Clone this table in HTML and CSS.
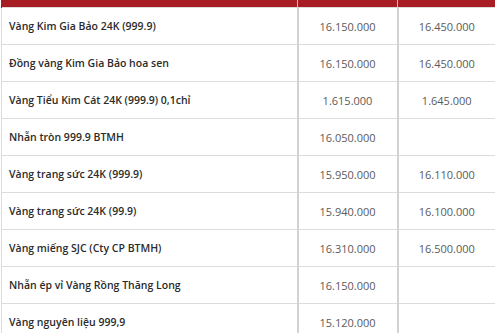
FILE: index.html
```html
<!DOCTYPE html>
<html lang="vi">
<head>
<meta charset="utf-8">
<link rel="stylesheet" href="styles.css">
</head>
<body>
<div class="wrap">
<table class="price-table">
<colgroup><col class="c-name"><col class="c-buy"><col class="c-sell"></colgroup>
<thead><tr class="head"><th></th><th></th><th></th></tr></thead>
<tbody>
<tr><td class="name">Vàng Kim Gia Bảo 24K (999.9)</td><td class="num">16.150.000</td><td class="num">16.450.000</td></tr>
<tr><td class="name">Đồng vàng Kim Gia Bảo hoa sen</td><td class="num">16.150.000</td><td class="num">16.450.000</td></tr>
<tr><td class="name">Vàng Tiểu Kim Cát 24K (999.9) 0,1chỉ</td><td class="num">1.615.000</td><td class="num">1.645.000</td></tr>
<tr><td class="name">Nhẫn tròn 999.9 BTMH</td><td class="num">16.050.000</td><td class="num"></td></tr>
<tr><td class="name">Vàng trang sức 24K (999.9)</td><td class="num">15.950.000</td><td class="num">16.110.000</td></tr>
<tr><td class="name">Vàng trang sức 24K (99.9)</td><td class="num">15.940.000</td><td class="num">16.100.000</td></tr>
<tr><td class="name">Vàng miếng SJC (Cty CP BTMH)</td><td class="num">16.310.000</td><td class="num">16.500.000</td></tr>
<tr><td class="name">Nhẫn ép vỉ Vàng Rồng Thăng Long</td><td class="num">16.150.000</td><td class="num"></td></tr>
<tr><td class="name">Vàng nguyên liệu 999,9</td><td class="num">15.120.000</td><td class="num"></td></tr>
</tbody>
</table>
</div>
</body>
</html>
```
FILE: styles.css
```css
html, body { margin: 0; padding: 0; background: #fff; }
.wrap { padding-left: 1px; width: 494px; overflow: hidden; height: 333px; }
.price-table {
  border-collapse: collapse;
  width: 494px;
  table-layout: fixed;
  font-family: "Open Sans", "Liberation Sans", sans-serif;
  font-size: 10.5px;
}
.c-name { width: 296px; }
.c-buy { width: 100px; }
.c-sell { width: 98px; }
.head th {
  height: 7px;
  padding: 0;
  background: #a81c24;
  border-left: 1px solid #e6b5b8;
  border-right: 1px solid #e6b5b8;
}
.head th:first-child { border-left-color: #a81c24; }
.head th:last-child { border-right-color: #a81c24; }
.price-table td {
  height: 36px;
  padding: 0;
  border: 1px solid #dcdcdc;
  vertical-align: middle;
}
.price-table td + td { border-left: 2px solid #d2d2d2; }
.name {
  padding-left: 7px !important;
  color: #2b2b2b;
  font-weight: 600;
}
.num {
  text-align: center;
  color: #5a5a5a;
  font-weight: 400;
  font-size: 11px;
}
```
